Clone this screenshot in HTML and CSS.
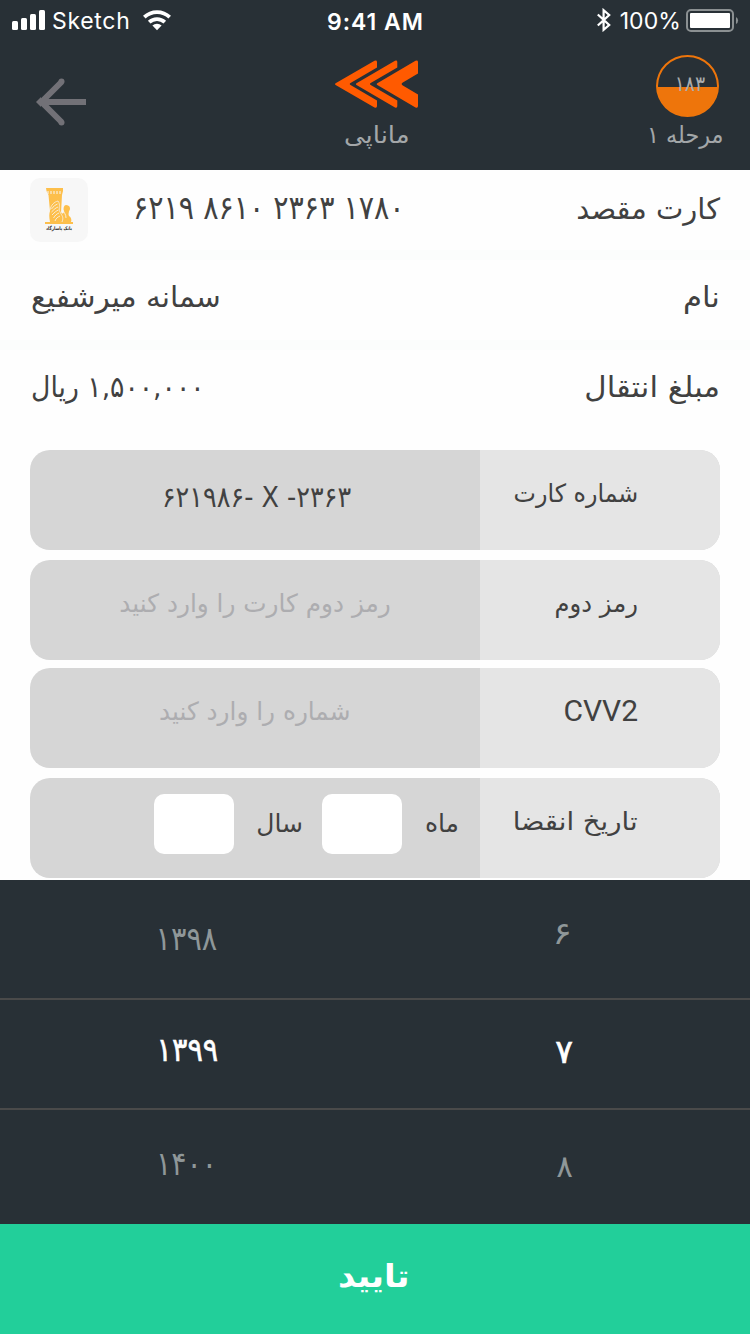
FILE: index.html
```html
<!DOCTYPE html>
<html lang="fa">
<head>
<meta charset="utf-8">
<title>ماناپی</title>
<link rel="stylesheet" href="styles.css">
</head>
<body>
<div class="screen">
  <header class="header">
    <div class="status">
      <div class="status-left">
        <svg class="signal" width="34" height="20" viewBox="0 0 34 20"><g fill="#fff"><rect x="0" y="11" width="6" height="9" rx="1.5"/><rect x="9" y="8" width="6" height="12" rx="1.5"/><rect x="18" y="4" width="6" height="16" rx="1.5"/><rect x="27" y="0" width="6" height="20" rx="1.5"/></g></svg>
        <span class="carrier">Sketch</span>
        <svg class="wifi" width="30" height="22" viewBox="0 0 30 22"><path fill="#fff" d="M15 20.2l4.6-4.6a6.6 6.6 0 0 0-9.200 0z"/><path d="M7.200 12.200a11.200 11.200 0 0 1 15.600 0M2.300 7.200a18.200 18.200 0 0 1 25.400 0" fill="none" stroke="#fff" stroke-width="3.700"/></svg>
      </div>
      <span class="clock">9:41 AM</span>
      <div class="status-right">
        <svg class="bluetooth" width="16" height="24" viewBox="0 0 16 24"><path d="M1.800 6.500L13.200 17 7.600 21.800V2.200L13.200 7 1.800 17.500" fill="none" stroke="#fff" stroke-width="2.200"/></svg>
        <span class="percent">100%</span>
        <svg class="battery" width="54" height="24" viewBox="0 0 54 24"><rect x="1" y="1" width="46" height="21" rx="4" fill="none" stroke="#8b9092" stroke-width="2"/><rect x="4" y="4" width="40" height="15" rx="1" fill="#fff"/><path d="M50 8a4 4 0 0 1 0 7z" fill="#8b9092"/></svg>
      </div>
    </div>
    <div class="navbar">
      <svg class="back" width="52" height="50" viewBox="0 0 52 50"><path d="M51 25H7M26.500 5L6.500 25l20 20" fill="none" stroke="#727177" stroke-width="6"/><circle cx="26.500" cy="4.500" r="3" fill="#727177"/><circle cx="26.500" cy="45.500" r="3" fill="#727177"/><path d="M1 25l5-5v10z" fill="#727177"/></svg>
      <div class="brand">
        <svg class="logo" width="84" height="49" viewBox="0 0 84 49"><path fill="#ff5a00" d="M.6 23.200L39.500.7Q42 0 42 2v5.500L15.500 23q-1.500 1 0 2L42 40.500V46q0 2.500-2.500 1.500L.6 25q-1.200-.9 0-1.800zM21.500 23.200L60 .7Q62.300 0 62.300 2v5.500L35.700 23q-1.500 1 0 2l26.600 15.500V46q0 2.500-2.300 1.500L21.500 25q-1.200-.9 0-1.800zM42.300 23.200L80.500.7Q83 0 83 2v11.500L67.800 22.500q-2.300 1.500 0 3L83 34.500V46q0 2.500-2.500 1.500L42.300 25q-1.200-.9 0-1.800z"/></svg>
        <span class="caption caption-brand" dir="rtl">ماناپی</span>
      </div>
      <div class="step">
        <div class="timer"><span class="timer-value">۱۸۳</span></div>
        <span class="caption caption-step" dir="rtl">مرحله ۱</span>
      </div>
    </div>
  </header>

  <section class="summary" dir="rtl">
    <div class="row">
      <span class="key key-card">کارت مقصد</span>
      <div class="card" dir="ltr">
        <svg class="bank" width="58" height="64" viewBox="0 0 58 64"><rect width="58" height="64" rx="10" fill="#f7f7f7"/><g fill="#fdbf4b"><path d="M16 10h17v3l-1 4-.5 9-1 18H21l-2.500-27-2-4z"/><path d="M15 44h28v2H15z"/><path d="M20 44c-1-5-1-8 0-11 0-6 4-11 8-10 3 3 1 8 3 11 1 2 2 2 3 0-1-4 0-7 2-7 4 0 5 4 3 6 0 2-1 3 0 5 2 1 3 4 2 6z"/></g><g fill="none" stroke="#f7f7f7"><path d="M18 13v3m3-3v3m3-3v3m3-3v3m3-3v3" stroke-width="1"/><path d="M20 32c1-5 4-8 8-9 3 4 0 7 2 11 2 4 4 5 2 10" stroke-width=".7"/><path d="M21.500 31c2-3 4-4 6-5m-6 8c3-3 4-4 6.500-5m-6 8c3-3 4-4 6.500-5m-5 8c2-3 3-4 5.500-5m-4 8c1-3 3-4 5-5m3-6c1 3 3 4 3 8" stroke-width=".8"/></g><text class="bank-name" x="29" y="51.500" text-anchor="middle" textLength="26" lengthAdjust="spacingAndGlyphs">بانک پاسارگاد</text></svg>
        <span class="card-number">۶۲۱۹ ۸۶۱۰ ۲۳۶۳ ۱۷۸۰</span>
      </div>
    </div>
    <div class="row">
      <span class="key key-name">نام</span>
      <span class="val val-name">سمانه میرشفیع</span>
    </div>
    <div class="row row-amount">
      <span class="key key-amount">مبلغ انتقال</span>
      <span class="val val-amount">۱,۵۰۰,۰۰۰ ریال</span>
    </div>
  </section>

  <section class="form" dir="rtl">
    <div class="field field-card">
      <div class="label"><span class="text label-card">شماره کارت</span></div>
      <div class="input"><span class="masked" dir="ltr">۶۲۱۹۸۶- X -۲۳۶۳</span></div>
    </div>
    <div class="field field-pin">
      <div class="label"><span class="text label-pin">رمز دوم</span></div>
      <div class="input"><span class="text hint">رمز دوم کارت را وارد کنید</span></div>
    </div>
    <div class="field field-cvv">
      <div class="label"><span class="cvv" dir="ltr">CVV2</span></div>
      <div class="input"><span class="text hint">شماره را وارد کنید</span></div>
    </div>
    <div class="field field-expiry">
      <div class="label"><span class="text label-expiry">تاریخ انقضا</span></div>
      <div class="input expiry">
        <span class="text unit month">ماه</span><span class="box"></span>
        <span class="text unit year">سال</span><span class="box"></span>
      </div>
    </div>
  </section>

  <section class="picker">
    <div class="option option-prev"><span class="num y98">۱۳۹۸</span><span class="num m6">۶</span></div>
    <div class="option option-current"><span class="num y99">۱۳۹۹</span><span class="num m7">۷</span></div>
    <div class="option option-next"><span class="num y00">۱۴۰۰</span><span class="num m8">۸</span></div>
  </section>

  <div class="confirm" dir="rtl"><span class="confirm-text">تایید</span></div>
</div>
</body>
</html>
```
FILE: styles.css
```css
* { box-sizing: border-box; }
body { margin: 0; font-family: "DejaVu Sans", sans-serif; color: #414141; background: #fefefe; }
svg { display: block; flex: none; }
span { white-space: nowrap; line-height: 40px; }
.screen { width: 750px; height: 1334px; display: flex; flex-direction: column; overflow: hidden; }

/* Header */
.header { height: 170px; background: #283036; flex: none; }
.status { height: 42px; display: grid; grid-template-columns: 1fr auto 1fr; color: #fff; font-family: Inter, sans-serif; font-size: 23px; }
.status-left, .status-right { display: flex; align-items: flex-start; }
.status-left { padding-left: 12px; }
.status-right { justify-content: flex-end; padding-right: 10px; }
.signal { margin-top: 10px; }
.carrier { margin: 1px 0 0 6px; letter-spacing: .7px; }
.wifi { margin: 9.500px 0 0 11px; }
.clock { margin: 2px 0 0 1px; font-weight: 600; letter-spacing: 1px; }
.bluetooth { margin: 8px 8px 0 0; }
.percent { margin: 1px 5px 0 0; letter-spacing: .1px; }
.battery { margin-top: 9px; }

.navbar { height: 128px; display: grid; grid-template-columns: 1fr 120px 1fr; }
.back { margin: 35px 0 0 35px; }
.brand { display: flex; flex-direction: column; align-items: center; padding-top: 18px; }
.logo { margin-left: 3px; }
.step { display: flex; flex-direction: column; align-items: flex-end; padding: 13px 26px 0 0; }
.timer { width: 63px; height: 62px; margin-right: 5px; border: 2px solid #ee750b; border-radius: 50%; background: linear-gradient(#283036 30px, #ee750b 30px); display: flex; justify-content: center; }
.timer-value { font-size: 21px; color: #aaacad; margin: 7px 0 0 4px; transform: scaleX(.9); }
.caption { color: #a3a7a9; font-size: 23.500px; }
.caption-brand { margin-top: 6px; margin-left: 4px; transform: scaleX(1.1); }
.caption-step { margin-top: -2px; transform: scaleX(.95); transform-origin: right; }

/* Transfer summary */
.summary { height: 270px; flex: none; }
.row { height: 90px; padding: 0 30px; display: flex; justify-content: space-between; align-items: flex-start; border-bottom: 10px solid #fbfdfc; font-size: 29px; }
.row-amount { border-bottom: 0; }
.key { margin-top: 17px; transform-origin: right; }
.key-card { margin-top: 19px; }
.key-name { transform: scaleX(1.06); }
.key-amount { transform: scaleX(1.06); }
.val { margin-top: 17px; transform-origin: left; }
.val-name { margin-left: 1px; transform: scaleX(1.02); }
.val-amount { margin-left: 1px; transform: scaleX(.92); }
.card { display: flex; margin-top: 8px; }
.card-number { margin: 10px 0 0 45px; font-size: 33px; transform: scaleX(.862); transform-origin: left; }
.bank-name { font: bold 5px "DejaVu Sans", sans-serif; fill: #222; }

/* Form */
.form { height: 440px; padding: 10px 30px 0; flex: none; display: flex; flex-direction: column; }
.field { height: 100px; flex: none; display: flex; border-radius: 20px; overflow: hidden; margin-bottom: 10px; background: #d6d6d6; }
.field-pin { margin-bottom: 8px; }
.label { width: 240px; background: #e5e5e5; padding-right: 82px; display: flex; align-items: flex-start; }
.input { width: 450px; display: flex; justify-content: center; align-items: flex-start; }
.text { font-size: 25px; margin-top: 24px; transform-origin: right; }
.label-card { transform: scaleX(.95); }
.label-pin { transform: scaleX(.97); }
.label-expiry { transform: scaleX(1.1); }
.hint { color: #adadb0; transform: scaleX(.99); transform-origin: center; }
.masked { font-size: 29px; margin: 27px 0 0 2px; transform: scaleX(.88); }
.cvv { font-family: Roboto, sans-serif; font-size: 30px; margin-top: 23px; }
.expiry { justify-content: flex-start; padding-right: 21px; }
.unit { margin-top: 26px; }
.month { width: 34px; margin-left: 23px; }
.year { width: 47px; margin: 26px 19px 0 22px; }
.box { width: 80px; height: 60px; margin-top: 16px; border-radius: 10px; background: #fff; }

/* Date picker */
.picker { height: 344px; flex: none; background: #283036; color: #8f9799; }
.option { display: grid; grid-template-columns: 1fr 1fr; justify-items: center; align-items: start; border-bottom: 2px solid #4a4a4a; }
.option-prev { height: 120px; }
.option-current { height: 110px; color: #fff; -webkit-text-stroke: .6px #fff; }
.option-next { height: 114px; border-bottom: 0; }
.num { font-size: 33px; }
.y98 { margin: 39px 2px 0 0; transform: scaleX(.87); }
.m6 { margin-top: 33px; font-size: 31px; transform: scaleX(1.17); }
.y99 { margin-top: 30px; transform: scaleX(.87); }
.m7 { margin: 32px 0 0 3px; }
.y00 { margin: 34px 3px 0 0; transform: scaleX(.86); }
.m8 { margin: 36px 0 0 4px; font-size: 31px; }

/* Confirm button */
.confirm { height: 110px; flex: none; background: #22cf9a; color: #fff; display: flex; justify-content: center; align-items: flex-start; }
.confirm-text { font-size: 32px; font-weight: bold; margin: 32px 0 0; padding-right: 3px; transform: scaleX(1.06); }
```
